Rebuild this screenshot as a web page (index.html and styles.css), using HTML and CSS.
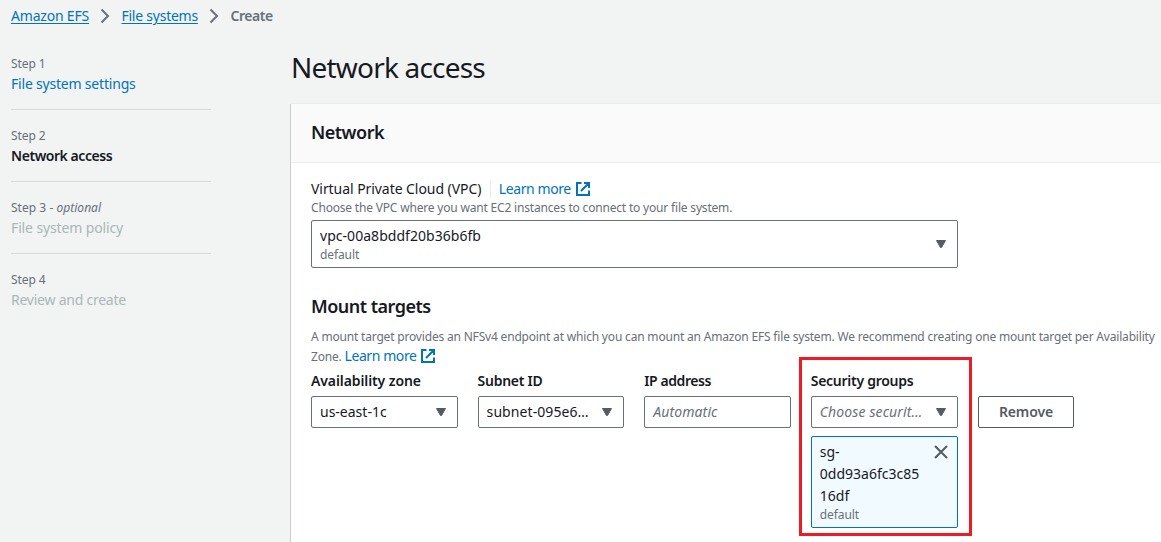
FILE: index.html
```html
<!DOCTYPE html>
<html lang="en">
<head>
<meta charset="utf-8">
<title>Network access - Amazon EFS</title>
<link rel="stylesheet" href="styles.css">
</head>
<body>
<svg class="defs" width="0" height="0" aria-hidden="true">
  <symbol id="external" viewBox="0 0 14 14"><path d="M5.5 1H1v12h12V8.500M8 1h5v5M12.500 1.500 5 9" fill="none" stroke="currentColor" stroke-width="2"/></symbol>
  <symbol id="chevron" viewBox="0 0 10 16"><path d="M1.500 1.500 8 8l-6.500 6.500" fill="none" stroke="currentColor" stroke-width="2"/></symbol>
  <symbol id="caret" viewBox="0 0 10 8"><path d="M.5.5h9L5.500 7.500h-1z" fill="currentColor" stroke="currentColor" stroke-linejoin="round"/></symbol>
  <symbol id="close" viewBox="0 0 14 14"><path d="m1 1 12 12M13 1 1 13" fill="none" stroke="currentColor" stroke-width="2"/></symbol>
</svg>
<nav class="breadcrumbs">
  <a class="crumb" href="#">Amazon EFS</a>
  <svg class="chevron"><use href="#chevron"/></svg>
  <a class="crumb crumb-second" href="#">File systems</a>
  <svg class="chevron"><use href="#chevron"/></svg>
  <span class="crumb-current">Create</span>
</nav>
<div class="layout">
  <ol class="steps">
    <li class="step"><div class="step-label">Step 1</div><a class="step-title link" href="#">File system settings</a></li>
    <li class="step"><div class="step-label">Step 2</div><div class="step-title current">Network access</div></li>
    <li class="step"><div class="step-label optional">Step 3 - <i>optional</i></div><div class="step-title disabled policy">File system policy</div></li>
    <li class="step"><div class="step-label">Step 4</div><div class="step-title disabled review">Review and create</div></li>
  </ol>
  <main class="main">
    <h1 class="page-title">Network access</h1>
    <section class="panel">
      <header class="panel-header"><h2 class="heading">Network</h2></header>
      <div class="panel-body">
        <div class="vpc-label"><span class="vpc-name">Virtual Private Cloud (VPC)</span><a class="link learn divided" href="#">Learn more<svg class="external"><use href="#external"/></svg></a></div>
        <p class="hint">Choose the VPC where you want EC2 instances to connect to your file system.</p>
        <div class="select vpc-select">
          <div class="select-text"><div class="id">vpc-00a8bddf20b36b6fb</div><div class="secondary">default</div></div>
          <svg class="caret"><use href="#caret"/></svg>
        </div>
        <h2 class="heading targets-heading">Mount targets</h2>
        <p class="hint targets-hint">A mount target provides an NFSv4 endpoint at which you can mount an Amazon EFS file system. We recommend creating one mount target per Availability<br>Zone. <a class="link learn" href="#">Learn more<svg class="external"><use href="#external"/></svg></a></p>
        <div class="target-row">
          <div class="fields">
            <div class="field"><div class="label zone">Availability zone</div><div class="select"><div class="select-text">us-east-1c</div><svg class="caret"><use href="#caret"/></svg></div></div>
            <div class="field"><div class="label">Subnet ID</div><div class="select"><div class="select-text subnet">subnet-095e6…</div><svg class="caret"><use href="#caret"/></svg></div></div>
            <div class="field"><div class="label ip">IP address</div><div class="select"><div class="select-text placeholder">Automatic</div></div></div>
            <div class="field highlighted">
              <div class="label">Security groups</div>
              <div class="select"><div class="select-text placeholder">Choose securit…</div><svg class="caret"><use href="#caret"/></svg></div>
              <div class="token"><div class="token-text"><div>sg-<br>0dd93a6fc3c85<br>16df</div><div class="secondary">default</div></div><svg class="close"><use href="#close"/></svg></div>
            </div>
          </div>
          <button class="remove">Remove</button>
        </div>
      </div>
    </section>
  </main>
</div>
</body>
</html>
```
FILE: styles.css
```css
* { box-sizing: border-box; }
body {
  margin: 0;
  height: 542px;
  overflow: hidden;
  background: #f2f3f3;
  color: #16191f;
  font: 14px/22px "Noto Sans", "Open Sans", sans-serif;
}
h1, h2, p, ol { margin: 0; padding: 0; }
svg { flex: none; }
.defs { position: absolute; }
.link { color: #0073bb; text-decoration: none; }

.breadcrumbs { display: flex; align-items: center; height: 38px; padding: 0 0 6px 11px; }
.crumb { color: #0073bb; letter-spacing: -.2px; text-decoration: underline; text-underline-offset: 2px; }
.crumb-second { letter-spacing: -.24px; }
.crumb-current { color: #687078; font-weight: 600; letter-spacing: -.45px; }
.chevron { width: 10px; height: 16px; margin: 0 11px 0 11.5px; color: #687078; }

.layout { display: flex; height: 504px; }
.steps { flex: none; width: 279px; padding-left: 11px; list-style: none; }
.step { width: 200px; height: 72px; padding-top: 17px; border-bottom: 1px solid #d5dbdb; }
.step:last-child { border: 0; }
.step-label { color: #687078; font-size: 12px; line-height: 18px; letter-spacing: -.1px; }
.optional { letter-spacing: .03px; }
.step-title { display: block; letter-spacing: -.2px; }
.current { font-weight: 600; letter-spacing: -.45px; }
.disabled { color: #aab7b8; }
.policy { letter-spacing: -.13px; }
.review { letter-spacing: -.24px; }

.main { flex: 1; display: flex; flex-direction: column; min-width: 0; padding-left: 12px; }
.page-title { height: 65px; padding-top: 11px; font-size: 28px; font-weight: 400; line-height: 36px; letter-spacing: -.8px; }
.panel { flex: 1; background: #fff; border-top: 1px solid #eaeded; box-shadow: -1px 1px 0 #cbcdcd; }
.panel-header { height: 59px; padding: 17px 20px; background: #fafafa; border-bottom: 1px solid #eaeded; }
.heading { font-size: 18px; font-weight: 600; line-height: 22px; letter-spacing: -.5px; }
.panel-body { padding: 15px 0 0 20px; }
.vpc-label { display: flex; align-items: center; height: 22px; }
.vpc-name { letter-spacing: -.06px; }
.learn { font-size: 14px; letter-spacing: -.42px; white-space: nowrap; }
.divided { height: 18px; margin-left: 8.5px; padding-left: 8px; border-left: 1px solid #eaeded; line-height: 18px; }
.external { width: 14px; height: 14px; margin-left: 5px; vertical-align: -2px; }
.hint { color: #687078; font-size: 12px; line-height: 16px; letter-spacing: -.184px; white-space: nowrap; }
.select { display: flex; align-items: center; height: 32px; padding: 0 11px 0 8px; border: 1px solid #687078; border-radius: 2px; background: #fff; }
.select-text { flex: 1; min-width: 0; white-space: nowrap; }
.subnet { letter-spacing: .08px; }
.caret { width: 10px; height: 8px; color: #545b64; }
.vpc-select { width: 647px; height: 48px; margin-top: 4px; }
.id { line-height: 20px; letter-spacing: .04px; }
.secondary { color: #687078; font-size: 12px; line-height: 17px; letter-spacing: -.1px; }
.targets-heading { margin-top: 27px; letter-spacing: -.5px; }
.targets-hint { margin-top: 10px; line-height: 19px; }
.target-row { display: flex; gap: 20px; margin-top: 4px; }
.fields { display: grid; grid-template-columns: repeat(4, 146.600px); gap: 20px; width: 647px; }
.label { margin-bottom: 4px; font-weight: 600; letter-spacing: -.28px; }
.zone { letter-spacing: -.1px; }
.ip { letter-spacing: -.4px; }
.placeholder { color: #687078; font-style: italic; letter-spacing: .12px; }
.highlighted { position: relative; width: 147px; }
/* Callout frame drawn over the security group field */
.highlighted::after { content: ""; position: absolute; inset: -13px -14px -8px -12px; border: 3px solid #ed1c24; pointer-events: none; }
.token { display: flex; justify-content: space-between; height: 92px; margin-top: 8px; padding: 4px 9px 0 8px; background: #f1faff; border: 1px solid #0073bb; border-radius: 2px; }
.token-text { margin-top: -.5px; }
.token .secondary { line-height: 16px; }
.close { width: 14px; height: 14px; margin-top: 4px; color: #545b64; }
.remove { width: 96px; height: 32px; margin-top: 26px; padding: 0; border: 1px solid #545b64; border-radius: 2px; background: #fff; color: #545b64; font: 600 14px/20px "Noto Sans", sans-serif; letter-spacing: -.1px; }
```
